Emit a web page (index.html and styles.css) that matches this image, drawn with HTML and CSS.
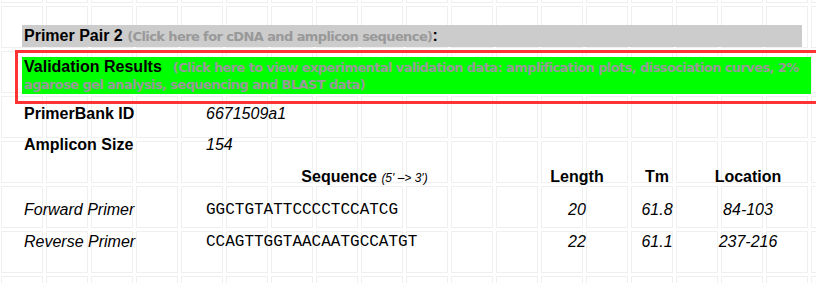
FILE: index.html
```
<!DOCTYPE html>
<html>
<head>
<meta charset="utf-8">
<link rel="stylesheet" href="styles.css">
</head>
<body>
<div class="page">
  <div class="pair-bar"><span class="title">Primer Pair 2</span> <a class="hint">(Click here for cDNA and amplicon sequence)</a><span class="title">:</span></div>
  <div class="frame">
    <div class="validation"><span class="title">Validation Results</span><a class="hint val-hint">(Click here to view experimental validation data: amplification plots, dissociation curves, 2% agarose gel analysis, sequencing and BLAST data)</a></div>
  </div>
  <div class="info">
    <div class="info-row first"><span class="label">PrimerBank ID</span><span class="value">6671509a1</span></div>
    <div class="info-row"><span class="label">Amplicon Size</span><span class="value">154</span></div>
  </div>
  <div class="primers">
    <div class="cell"></div>
    <div class="cell head seq-head">Sequence <span class="dir">(5' –&gt; 3')</span></div>
    <div class="cell head num">Length</div>
    <div class="cell head num">Tm</div>
    <div class="cell head num">Location</div>

    <div class="cell name">Forward Primer</div>
    <div class="cell seq">GGCTGTATTCCCCTCCATCG</div>
    <div class="cell val num">20</div>
    <div class="cell val num">61.8</div>
    <div class="cell val num">84-103</div>

    <div class="cell name">Reverse Primer</div>
    <div class="cell seq">CCAGTTGGTAACAATGCCATGT</div>
    <div class="cell val num">22</div>
    <div class="cell val num">61.1</div>
    <div class="cell val num">237-216</div>
  </div>
</div>
</body>
</html>
```
FILE: styles.css
```
html, body {
  margin: 0;
  padding: 0;
}
body {
  background-color: #ffffff;
  background-image: url("data:image/svg+xml,%3Csvg xmlns='http://www.w3.org/2000/svg' width='45' height='45'%3E%3Crect x='1.5' y='1.5' width='41' height='41' fill='none' stroke='%23efefef' stroke-width='1'/%3E%3C/svg%3E");
  background-size: 45px 45px;
  background-position: 0 5px;
  font-family: "Liberation Sans", Arial, sans-serif;
  font-size: 16px;
  color: #000;
  width: 816px;
  height: 283px;
  overflow: hidden;
}
.page {
  padding: 25px 0 0 15px;
}
.title {
  font-weight: bold;
  font-size: 16px;
}
.hint {
  font-family: "DejaVu Sans", Verdana, sans-serif;
  font-weight: bold;
  font-size: 13px;
  letter-spacing: -0.6px;
  color: #999999;
}
.pair-bar {
  margin-left: 7px;
  width: 778px;
  height: 22px;
  line-height: 22px;
  padding-left: 2px;
  background: #cccccc;
}
.frame {
  margin-top: 3px;
  width: 789px;
  border: 3px solid #ff3333;
  padding: 4px 5px 7px 4px;
}
.validation {
  background: #00ff00;
  padding: 2px 0 1px 2px;
  height: 34px;
  line-height: 16px;
}
.val-hint {
  margin-left: 11px;
}
.info {
  padding-left: 9px;
}
.info-row {
  display: flex;
  line-height: 32px;
}
.info-row.first {
  line-height: 18px;
  padding-top: 1px;
  padding-bottom: 6px;
}
.label {
  width: 182px;
  font-weight: bold;
}
.value {
  font-style: italic;
}
.primers {
  display: grid;
  grid-template-columns: 184px 317px 108px 52px 130px;
  margin-left: 7px;
  line-height: 32px;
}
.cell {
  white-space: nowrap;
}
.name {
  padding-left: 2px;
  font-style: italic;
}
.head {
  font-weight: bold;
}
.seq-head {
  text-align: center;
}
.dir {
  font-weight: normal;
  font-style: italic;
  font-size: 12px;
}
.num {
  text-align: center;
}
.val {
  font-style: italic;
}
.seq {
  font-family: "Liberation Mono", "Courier New", monospace;
  font-size: 16px;
}
```
